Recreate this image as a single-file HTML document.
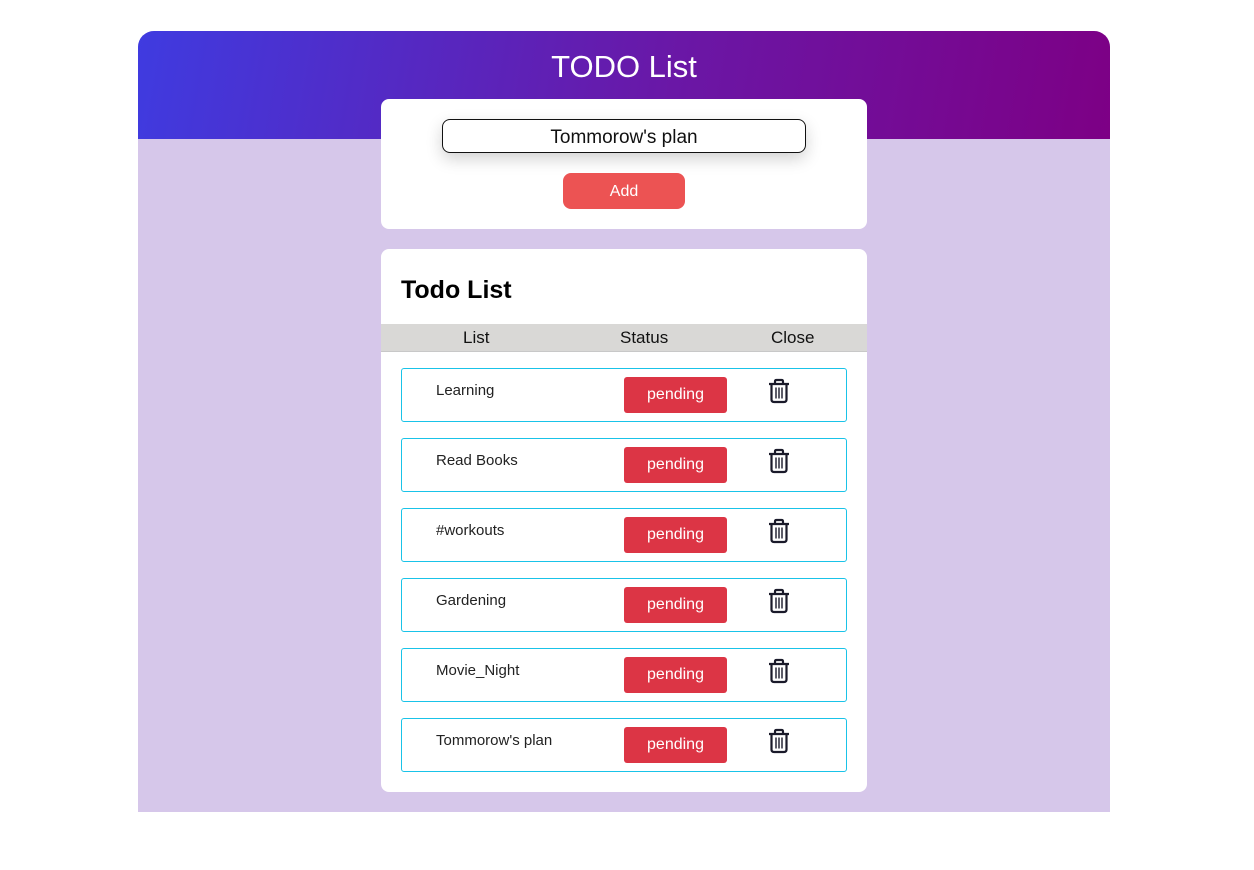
<!DOCTYPE html>
<html><head><style>
body{margin:0;background:#fff;font-family:"Liberation Sans",sans-serif;}
.wrap{position:absolute;left:138px;top:31px;width:972px;height:781px;background:#d6c7ea;border-radius:16px 16px 0 0;overflow:hidden}
.hdr{height:108px;background:linear-gradient(100deg,#3f3be0,#6a17a6 55%,#7d0085);color:#fff;text-align:center;font-size:31px;line-height:72px}
.card{position:absolute;left:243px;width:486px;background:#fff;border-radius:8px}
.inp{position:absolute;left:61px;top:20px;width:362px;height:32px;border:1px solid #111;border-radius:8px;box-shadow:0 6px 16px rgba(0,0,0,.18);text-align:center;font-size:19px;line-height:35px;color:#111}
.add{position:absolute;left:182px;top:74px;width:122px;height:36px;background:#ec5353;border-radius:8px;color:#fff;text-align:center;line-height:37px;font-size:16px}
h2{margin:0;position:absolute;left:20px;top:27px;font-size:25px}
.th{position:absolute;top:75px;left:0;width:486px;height:27px;background:#d9d8d6;border-bottom:1px solid #c8c8c8;font-size:17px;line-height:28px;color:#111}
.th span{position:absolute}
.row{position:absolute;left:20px;width:444px;height:52px;border:1px solid #19c3e8;border-radius:3px}
.row .t{position:absolute;left:34px;top:13px;font-size:15px;color:#222}
.row .p{position:absolute;left:222px;top:8px;width:103px;height:36px;background:#dc3545;border-radius:3px;color:#fff;text-align:center;line-height:36px;font-size:16px}
.row svg{position:absolute;left:364px;top:9px}
</style></head><body>
<div class="wrap"><div class="hdr">TODO List</div></div>
<div class="card" style="left:381px;top:99px;height:130px">
<div class="inp">Tommorow's plan</div><div class="add">Add</div></div>
<div class="card" style="left:381px;top:249px;height:543px">
<h2>Todo List</h2>
<div class="th"><span style="left:82px">List</span><span style="left:239px">Status</span><span style="left:390px">Close</span></div>
<div id="rows"></div>
</div>
<script>
var n=["Learning","Read Books","#workouts","Gardening","Movie_Night","Tommorow's plan"],h="";
n.forEach(function(t,i){h+='<div class="row" style="top:'+(119+i*70)+'px"><span class="t">'+t+'</span><span class="p">pending</span><svg width="26" height="26" viewBox="0 0 26 26" fill="none" stroke="#1a1a2a" stroke-width="2.2" stroke-linejoin="round"><path d="M3 6h20M9 6V3.5Q9 2 10.5 2h5Q17 2 17 3.5V6M5.5 6v15.5Q5.5 24 8 24h10q2.5 0 2.5-2.5V6"/><path d="M10 9.5v11M13 9.5v11M16 9.5v11" stroke-width="1.4"/></svg></div>'});
document.getElementById("rows").innerHTML=h;
</script>
</body></html>
